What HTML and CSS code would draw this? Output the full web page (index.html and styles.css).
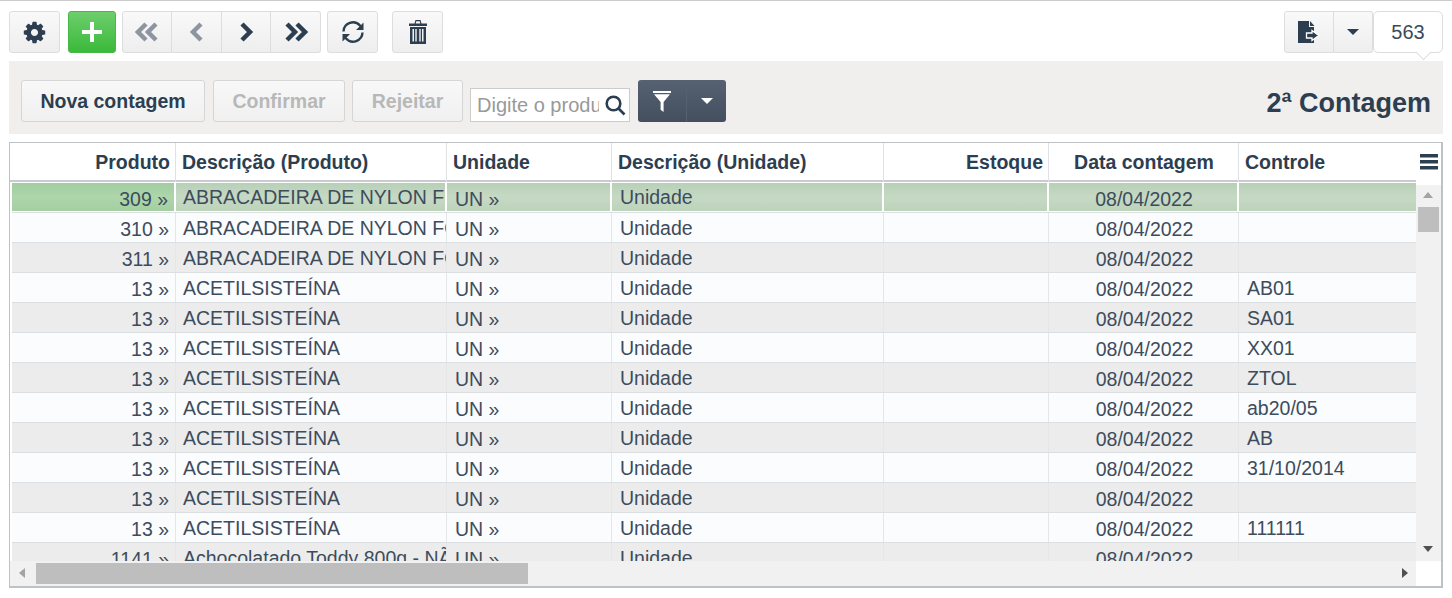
FILE: index.html
```html
<!DOCTYPE html>
<html lang="pt">
<head>
<meta charset="utf-8">
<title>2ª Contagem</title>
<link rel="stylesheet" href="styles.css">
</head>
<body>
<div class="page">
  <div class="toolbar">
    <button class="btn tool w51"><svg class="ic" width="25" height="25" viewBox="0 0 1792 1792"><path d="M1152 896q0-106-75-181t-181-75-181 75-75 181 75 181 181 75 181-75 75-181zm512-109v222q0 12-8 23t-20 13l-185 28q-19 54-39 91 35 50 107 138 10 12 10 25t-9 23q-27 37-99 108t-94 71q-12 0-26-9l-138-108q-44 23-91 38-16 136-29 186-7 28-36 28h-222q-14 0-24.5-8.5t-11.5-21.5l-28-184q-49-16-90-37l-141 107q-10 9-25 9-14 0-25-11-126-114-165-168-7-10-7-23 0-12 8-23 15-21 51-66.5t54-70.5q-27-50-41-99l-183-27q-13-2-21-12.5t-8-23.5v-222q0-12 8-23t19-13l186-28q14-46 39-92-40-57-107-138-10-12-10-24 0-10 9-23 26-36 98.5-107.5t94.5-71.5q13 0 26 10l138 107q44-23 91-38 16-136 29-186 7-28 36-28h222q14 0 24.5 8.5t11.5 21.5l28 184q49 16 90 37l142-107q9-9 24-9 13 0 25 10 129 119 165 170 7 8 7 22 0 12-8 23-15 21-51 66.5t-54 70.5q26 50 41 98l183 28q13 2 21 12.5t8 23.5z"/></svg></button>
    <button class="btn green tool"><svg width="24" height="24" viewBox="0 0 24 24"><path class="plus" d="M10 2h4v8h8v4h-8v8h-4v-8H2v-4h8z"/></svg></button>
    <div class="group nav">
      <button class="btn seg w50"><svg class="chev off" width="24" height="20" viewBox="0 0 24 20"><path d="M11 2 3 10l8 8M21 2l-8 8 8 8"/></svg></button>
      <button class="btn seg w50"><svg class="chev off" width="16" height="20" viewBox="0 0 16 20"><path d="M12 2 4 10l8 8"/></svg></button>
      <button class="btn seg w49"><svg class="chev" width="16" height="20" viewBox="0 0 16 20"><path d="m4 2 8 8-8 8"/></svg></button>
      <button class="btn seg w50"><svg class="chev" width="24" height="20" viewBox="0 0 24 20"><path d="m3 2 8 8-8 8M13 2l8 8-8 8"/></svg></button>
    </div>
    <button class="btn tool w51 gap-6"><svg class="sync" width="24" height="24" viewBox="0 0 24 24"><path d="M2.500 11.500a9.500 9.500 0 0 1 16.500-6L20.500 7"/><path d="M21.500 12.500a9.500 9.500 0 0 1-16.500 6L3.500 17"/><path class="fill" d="M22.500 2.500v7.500H15zM1.500 21.500V14H9z"/></svg></button>
    <button class="btn tool w51 gap-14"><svg class="ic" width="18" height="24" viewBox="0 0 18 24"><path d="M6.500 0h5l1 3.500H18V6H0V3.500h5.500zM7.300 1.200l-.6 2.300h4.600l-.6-2.300z"/><path d="M1 7h16v17H1zM3.500 9v12.500H5V9zM6.500 9h-.2v12.500h1.400V9zM10.300 9v12.500h1.400V9zM13 9v12.500h1.500V9z" fill-rule="evenodd"/></svg></button>
    <div class="spacer"></div>
    <div class="group">
      <button class="btn seg w50"><svg class="ic" width="22" height="22" viewBox="0 0 22 22"><path d="M0 0h11v6h5v16H0z"/><path d="M12 0l4.500 5H12z"/><path class="arrow" d="M14 9.500 20.700 14.500 14 19.500V17H8.500v-5H14z"/></svg></button>
      <button class="btn seg w39"><span class="caret"></span></button>
    </div>
    <div class="counter">563</div>
  </div>

  <div class="panel">
    <button class="btn act w184">Nova contagem</button>
    <button class="btn act w132 dis">Confirmar</button>
    <button class="btn act w111 dis">Rejeitar</button>
    <div class="search">
      <input class="search-in" type="text" placeholder="Digite o produto">
      <svg class="sr" width="22" height="22" viewBox="0 0 22 22"><circle cx="9.500" cy="9.500" r="6.800"/><path d="m14.500 14.500 6 6"/></svg>
    </div>
    <div class="group dark-g">
      <button class="btn dark w49"><svg width="18" height="21" viewBox="0 0 18 21"><path fill="#fff" d="M0 0h18v2H0zM1 3.200h16L10.600 11v10l-3-2.200V11z"/></svg></button>
      <button class="btn dark w39"><span class="caret white"></span></button>
    </div>
    <h1 class="title">2ª Contagem</h1>
  </div>

  <div class="frame">
    <div class="upper">
      <div class="table">
        <div class="thead">
          <div class="th r">Produto</div>
          <div class="th">Descrição (Produto)</div>
          <div class="th">Unidade</div>
          <div class="th">Descrição (Unidade)</div>
          <div class="th r">Estoque</div>
          <div class="th c">Data contagem</div>
          <div class="th last">Controle</div>
        </div>
        <div class="tbody">
          <div class="row sel"><div class="td r low first">309 »</div><div class="td">ABRACADEIRA DE NYLON FO</div><div class="td low">UN »</div><div class="td">Unidade</div><div class="td"></div><div class="td c low">08/04/2022</div><div class="td last"></div></div>
          <div class="row"><div class="td r low">310 »</div><div class="td">ABRACADEIRA DE NYLON FO</div><div class="td low">UN »</div><div class="td">Unidade</div><div class="td"></div><div class="td c low">08/04/2022</div><div class="td last"></div></div>
          <div class="row alt"><div class="td r low">311 »</div><div class="td">ABRACADEIRA DE NYLON FO</div><div class="td low">UN »</div><div class="td">Unidade</div><div class="td"></div><div class="td c low">08/04/2022</div><div class="td last"></div></div>
          <div class="row"><div class="td r low">13 »</div><div class="td">ACETILSISTEÍNA</div><div class="td low">UN »</div><div class="td">Unidade</div><div class="td"></div><div class="td c low">08/04/2022</div><div class="td last">AB01</div></div>
          <div class="row alt"><div class="td r low">13 »</div><div class="td">ACETILSISTEÍNA</div><div class="td low">UN »</div><div class="td">Unidade</div><div class="td"></div><div class="td c low">08/04/2022</div><div class="td last">SA01</div></div>
          <div class="row"><div class="td r low">13 »</div><div class="td">ACETILSISTEÍNA</div><div class="td low">UN »</div><div class="td">Unidade</div><div class="td"></div><div class="td c low">08/04/2022</div><div class="td last">XX01</div></div>
          <div class="row alt"><div class="td r low">13 »</div><div class="td">ACETILSISTEÍNA</div><div class="td low">UN »</div><div class="td">Unidade</div><div class="td"></div><div class="td c low">08/04/2022</div><div class="td last">ZTOL</div></div>
          <div class="row"><div class="td r low">13 »</div><div class="td">ACETILSISTEÍNA</div><div class="td low">UN »</div><div class="td">Unidade</div><div class="td"></div><div class="td c low">08/04/2022</div><div class="td last">ab20/05</div></div>
          <div class="row alt"><div class="td r low">13 »</div><div class="td">ACETILSISTEÍNA</div><div class="td low">UN »</div><div class="td">Unidade</div><div class="td"></div><div class="td c low">08/04/2022</div><div class="td last">AB</div></div>
          <div class="row"><div class="td r low">13 »</div><div class="td">ACETILSISTEÍNA</div><div class="td low">UN »</div><div class="td">Unidade</div><div class="td"></div><div class="td c low">08/04/2022</div><div class="td last">31/10/2014</div></div>
          <div class="row alt"><div class="td r low">13 »</div><div class="td">ACETILSISTEÍNA</div><div class="td low">UN »</div><div class="td">Unidade</div><div class="td"></div><div class="td c low">08/04/2022</div><div class="td last"></div></div>
          <div class="row"><div class="td r low">13 »</div><div class="td">ACETILSISTEÍNA</div><div class="td low">UN »</div><div class="td">Unidade</div><div class="td"></div><div class="td c low">08/04/2022</div><div class="td last">111111</div></div>
          <div class="row alt"><div class="td r low">1141 »</div><div class="td">Achocolatado Toddy 800g - NÃ</div><div class="td low">UN »</div><div class="td">Unidade</div><div class="td"></div><div class="td c low">08/04/2022</div><div class="td last"></div></div>
        </div>
      </div>
      <div class="side">
        <div class="menu"><svg width="18" height="16" viewBox="0 0 18 16"><path d="M0 0h18v3.500H0zM0 6h18v3.500H0zM0 12h18v3.500H0z"/></svg></div>
        <div class="vscroll">
          <span class="arr up"></span>
          <span class="vthumb"></span>
          <span class="arr down"></span>
        </div>
      </div>
    </div>
    <div class="lower">
      <div class="hscroll">
        <span class="arr left"></span>
        <span class="hthumb"></span>
        <span class="arr right"></span>
      </div>
      <div class="corner"></div>
    </div>
  </div>
</div>
</body>
</html>
```

FILE: styles.css
```css
* { box-sizing: border-box; }
html, body { margin: 0; padding: 0; background: #fff; overflow: hidden; }
body { font-family: "Liberation Sans", Arial, sans-serif; font-size: 19.5px; color: #2c3e50; }
.page { width: 1452px; height: 598px; border-top: 1px solid #ccc; padding: 10px 9px 0; }

.toolbar { display: flex; align-items: stretch; height: 42px; gap: 8px; position: relative; z-index: 2; }
.toolbar .nav { margin-left: -2px; }
.toolbar .gap-6 { margin-left: -2px; }
.toolbar .gap-14 { margin-left: 6px; }
.spacer { flex: 1; }

.btn { display: flex; align-items: center; justify-content: center; height: 42px; padding: 0; margin: 0; border: 1px solid #ddd; border-radius: 3px; background: linear-gradient(#f9f9f9, #eeeeee); font: bold 19.5px "Liberation Sans", Arial, sans-serif; color: #2c3e50; }
.tool.green { width: 48px; border-color: #47b947; background: linear-gradient(#6dce6d, #3aba3a); }
.plus { fill: #fff; }
.ic { fill: #2c3e50; }
.arrow { fill: #2c3e50; stroke: #fff; stroke-width: 1.3; }
.w49 { width: 49px; } .w50 { width: 50px; } .w51 { width: 51px; } .w39 { width: 39px; }
.w184 { width: 184px; } .w132 { width: 132px; } .w111 { width: 111px; }

.group { display: flex; }
.seg { border-radius: 0; border-left-width: 0; }
.seg:first-child { border-left-width: 1px; border-radius: 3px 0 0 3px; }
.seg:last-child { border-radius: 0 3px 3px 0; }
.chev { fill: none; stroke: #2c3e50; stroke-width: 4.500; }
.chev.off { stroke: #8d96a0; }
.sync { fill: none; stroke: #2c3e50; stroke-width: 2.400; }
.sync .fill { fill: #2c3e50; stroke: none; }
.caret { width: 0; height: 0; border-left: 6px solid transparent; border-right: 6px solid transparent; border-top: 6px solid #2c3e50; }
.caret.white { border-top-color: #fff; }

.counter { display: flex; align-items: center; justify-content: center; width: 70px; height: 42px; margin-left: -8px; background: #fff; border: 1px solid #ddd; border-radius: 5px; color: #3a4a5a; font-size: 20px; position: relative; }
.counter::after { content: ""; position: absolute; left: 44px; bottom: -6px; width: 10px; height: 10px; background: #fff; border-right: 1px solid #ddd; border-bottom: 1px solid #ddd; transform: rotate(45deg); }

.panel { display: flex; align-items: flex-end; gap: 8px; height: 73px; margin-top: 8px; padding: 0 12px 12px; background: #f0efee; }
.act { background: linear-gradient(#f8f8f8, #f0f0f0); border-color: #d5d5d5; }
.dis { color: #b8b8b8; }
.act.w111 { margin-left: -1px; }
.search { display: flex; align-items: center; width: 160px; height: 34px; margin-left: -1px; background: #fff; border: 1px solid #ccc; padding-right: 3px; }
.search-in { flex: 1; min-width: 0; width: 0; height: 100%; border: 0; outline: 0; padding: 0 0 0 6px; font: 20px "Liberation Sans", Arial, sans-serif; color: #2c3e50; background: transparent; }
.search-in::placeholder { color: #999; opacity: 1; }
.sr { fill: none; stroke: #2c3e50; stroke-width: 2.600; margin-left: 5px; }
.dark { background: linear-gradient(#566172, #434e5e); border: 0; width: 48px; border-radius: 3px 0 0 3px; }
.dark + .dark { width: 40px; border-left: 1px solid #56606f; border-radius: 0 3px 3px 0; }
.title { margin: 0 0 0 auto; font-size: 27px; line-height: 30px; font-weight: bold; color: #2c3e50; position: relative; top: -4px; }

.frame { display: flex; flex-direction: column; height: 446px; margin-top: 8px; border: 1px solid #bcc3c8; border-bottom-width: 2px; border-right-width: 2px; }
.upper { display: flex; height: 418px; }
.table { width: 1407px; overflow: hidden; }
.thead { display: grid; grid-template-columns: 166px 271px 165px 272px 165px 190px 178px; height: 39px; border-bottom: 2px solid #c6ccd0; }
.th { font-weight: bold; line-height: 39px; padding: 0 5px 0 6px; border-right: 1px solid #dfe2e5; white-space: nowrap; }
.th.last { border-right: 0; }
.r { text-align: right; }
.c { text-align: center; }
.tbody { margin-top: 1px; height: 379px; overflow: hidden; }
.row { display: grid; grid-template-columns: 164px 271px 165px 272px 165px 190px 178px; margin-left: 2px; height: 30px; padding-bottom: 1px; border-bottom: 1px solid #dcdfe2; background: #fbfcfe; }
.row.alt { background: #ececec; }
.td { height: 29px; padding: 0 6px 0 8px; line-height: 31px; color: #3d4c5c; white-space: nowrap; overflow: hidden; border-right: 1px solid #e4e6e8; }
.td:nth-child(2) { padding-left: 7px; }
.td.last { border-right: 0; }
.td.low { line-height: 33px; }
.row.sel { background: #fff; }
.sel .td { height: 28px; background: linear-gradient(#b7d0b6, #c6d9c4 50%, #bcd3ba); border-right: 2px solid #fff; line-height: 29px; }
.sel .td.low { line-height: 33px; }
.sel .td.first { background: linear-gradient(#a2cda0, #add6ab 50%, #a3cfa1); }
.sel .td.last { border-right: 0; }

.side { width: 25px; display: flex; flex-direction: column; }
.menu { height: 42px; background: #fff; display: flex; justify-content: center; padding-top: 11px; }
.menu svg { fill: #2c3e50; }
.vscroll { flex: 1; background: #f1f1f1; position: relative; }
.vthumb { position: absolute; left: 2px; right: 2px; top: 22px; height: 25px; background: #bebebe; }
.hscroll { flex: 1; background: #f1f1f1; position: relative; }
.hthumb { position: absolute; left: 26px; top: 2px; width: 492px; height: 21px; background: #bebebe; }
.lower { display: flex; height: 25px; }
.corner { width: 25px; background: #fff; }
.arr { position: absolute; width: 0; height: 0; }
.up { left: 7px; top: 7px; border-left: 5px solid transparent; border-right: 5px solid transparent; border-bottom: 6px solid #a3a3a3; }
.down { left: 7px; bottom: 9px; border-left: 5px solid transparent; border-right: 5px solid transparent; border-top: 6px solid #505050; }
.left { left: 9px; top: 7px; border-top: 5px solid transparent; border-bottom: 5px solid transparent; border-right: 6px solid #a3a3a3; }
.right { right: 8px; top: 7px; border-top: 5px solid transparent; border-bottom: 5px solid transparent; border-left: 6px solid #505050; }
```
